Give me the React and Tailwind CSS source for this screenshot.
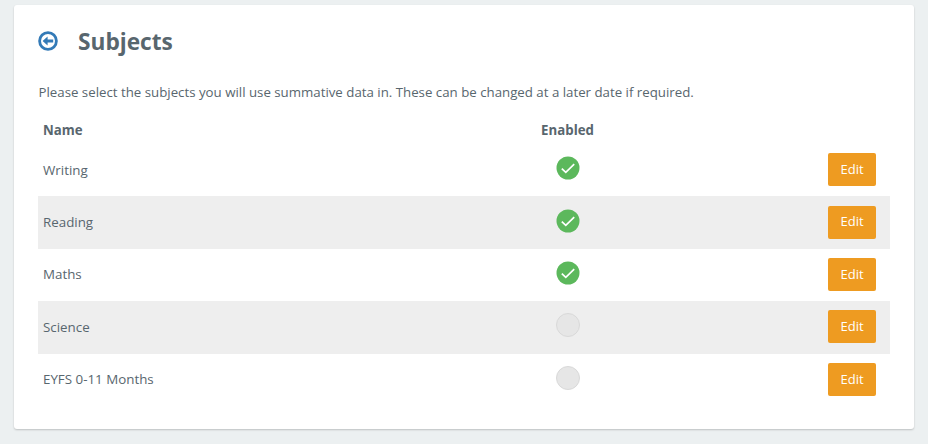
const rows = [
  { name: "Writing", on: true },
  { name: "Reading", on: true },
  { name: "Maths", on: true },
  { name: "Science", on: false },
  { name: "EYFS 0-11 Months", on: false },
];

function Check({ on }) {
  if (!on) return <div className="w-[24px] h-[24px] rounded-full bg-[#e6e6e6] border border-[#d9d9d9]" />;
  return (
    <svg width="24" height="24" viewBox="0 0 24 24">
      <circle cx="12" cy="12" r="11.5" fill="#5cb85c" />
      <path d="M5.8 12.6 L9.8 16.4 L18.2 8.2" fill="none" stroke="#fff" strokeWidth="1.7" />
    </svg>
  );
}

export default function App() {
  return (
    <div className="w-[928px] h-[444px] overflow-hidden bg-[#ecf0f1] pt-[5px] pl-[14px] font-['Open_Sans',sans-serif] text-[#58666e]">
      <div className="w-[900px] h-[424px] bg-white rounded-[3px] shadow-[0_1px_2px_rgba(0,0,0,0.2)] pl-[24px] pr-[24px]">
        <div className="flex items-center h-[72px]">
          <svg width="20" height="20" viewBox="0 0 20 20" className="mr-[20px]">
            <circle cx="10" cy="10" r="8.4" fill="none" stroke="#337ab7" strokeWidth="2.8" />
            <path d="M4.6 10 L9.6 5.6 V8.4 H15.2 V11.6 H9.6 V14.4 Z" fill="#337ab7" />
          </svg>
          <h1 className="text-[22.7px] font-bold leading-none mt-[2px]">Subjects</h1>
        </div>
        <p className="text-[13.28px] leading-[18px] mt-[6px] ml-[0.5px] whitespace-nowrap">
          Please select the subjects you will use summative data in. These can be changed at a later date if required.
        </p>
        <div className="grid grid-cols-[498px_53px_1fr] items-center h-[28px] mt-[15px] pl-[5px] text-[13.25px] font-bold">
          <div className="mt-[2px]">Name</div>
          <div className="text-center whitespace-nowrap mt-[2px]">Enabled</div>
          <div />
        </div>
        {rows.map((r, i) => (
          <div
            key={r.name}
            className={`grid grid-cols-[498px_53px_1fr] items-center h-[52.4px] pl-[5px] pr-[14px] text-[13.35px] ${i % 2 === 1 ? "bg-[#eeeeee]" : ""}`}
          >
            <div className="mt-[-1px]">{r.name}</div>
            <div className="flex justify-center mt-[-4px]"><Check on={r.on} /></div>
            <div className="flex justify-end">
              <button className="w-[48px] h-[33px] mt-[-1px] bg-[#ee9b21] text-white text-[13px] rounded-[2px]">Edit</button>
            </div>
          </div>
        ))}
      </div>
    </div>
  );
}
